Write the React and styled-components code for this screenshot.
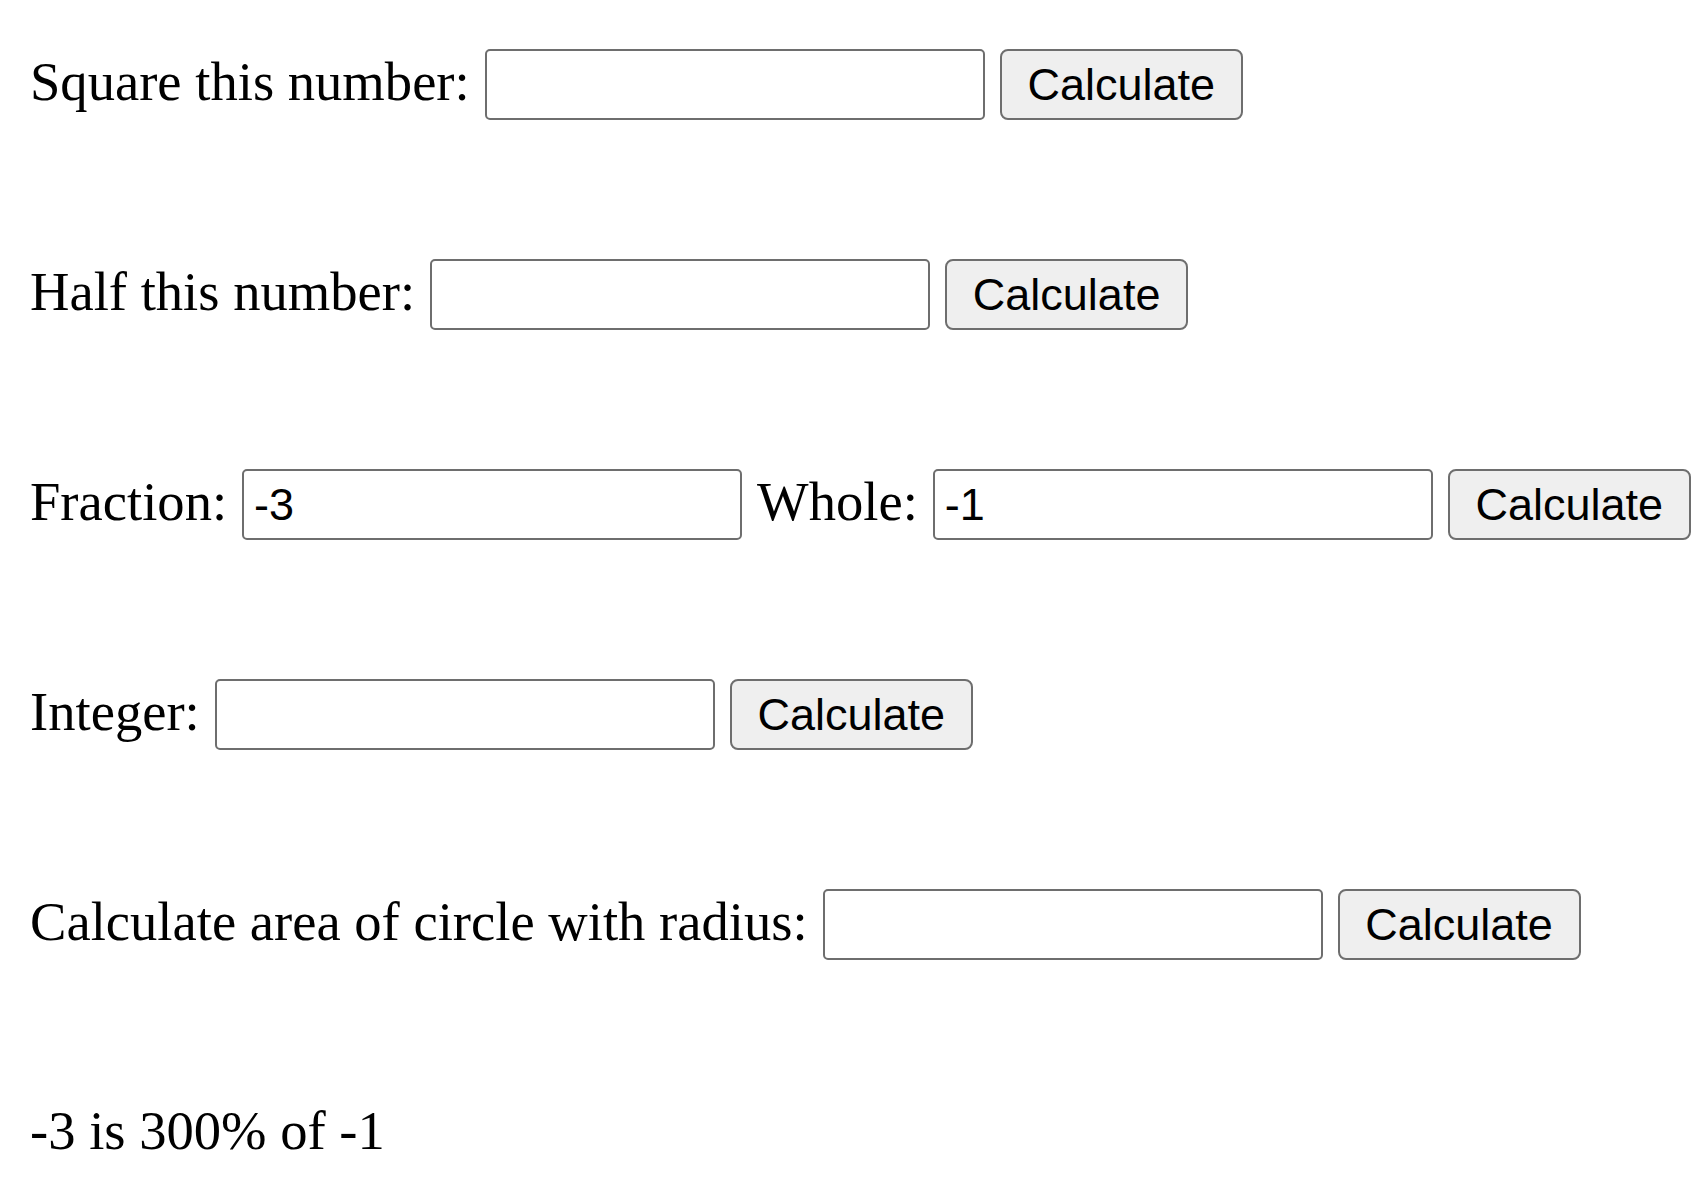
import styled, { createGlobalStyle } from "styled-components";
import { useState } from "react";

const GlobalStyle = createGlobalStyle`
    html, body {
        margin: 0;
        padding: 0;
        background: #ffffff;
    }
`;

const App = () => {
    const [fraction, setFraction] = useState("-3");
    const [whole, setWhole] = useState("-1");

    return (
        <>
            <GlobalStyle />
            <Page>
                <Row>
                    <Label>Square this number:</Label>
                    <NumberInput type="text" />
                    <CalcButton>Calculate</CalcButton>
                </Row>
                <Row>
                    <Label>Half this number:</Label>
                    <NumberInput type="text" />
                    <CalcButton>Calculate</CalcButton>
                </Row>
                <Row>
                    <Label>Fraction:</Label>
                    <NumberInput
                        type="text"
                        value={fraction}
                        onChange={(e) => setFraction(e.target.value)}
                    />
                    <Label>Whole:</Label>
                    <NumberInput
                        type="text"
                        value={whole}
                        onChange={(e) => setWhole(e.target.value)}
                    />
                    <CalcButton>Calculate</CalcButton>
                </Row>
                <Row>
                    <Label>Integer:</Label>
                    <NumberInput type="text" />
                    <CalcButton>Calculate</CalcButton>
                </Row>
                <Row>
                    <Label>Calculate area of circle with radius:</Label>
                    <NumberInput type="text" />
                    <CalcButton>Calculate</CalcButton>
                </Row>
                <Result>-3 is 300% of -1</Result>
            </Page>
        </>
    );
};

export default App;

const Page = styled.div`
    display: flex;
    flex-direction: column;
    gap: 139px;
    padding: 49px 0 0 30px;
    font-family: "Liberation Serif", "Times New Roman", serif;
    font-size: 54.6px;
    color: #000;
`;

const Row = styled.div`
    display: flex;
    align-items: baseline;
    gap: 15px;
    height: 71px;
`;

const Label = styled.span`
    white-space: nowrap;
`;

const NumberInput = styled.input`
    box-sizing: border-box;
    width: 500px;
    height: 71px;
    padding: 0 10px;
    border: 2px solid #6e6e6e;
    border-radius: 5px;
    background: #fff;
    font-family: "Liberation Sans", Arial, sans-serif;
    font-size: 45px;
    color: #000;
    outline: none;
`;

const CalcButton = styled.button`
    box-sizing: border-box;
    width: 243px;
    height: 71px;
    padding: 0;
    border: 2px solid #6e6e6e;
    border-radius: 8px;
    background: #efefef;
    font-family: "Liberation Sans", Arial, sans-serif;
    font-size: 45px;
    color: #000;
`;

const Result = styled.div`
    white-space: nowrap;
`;
